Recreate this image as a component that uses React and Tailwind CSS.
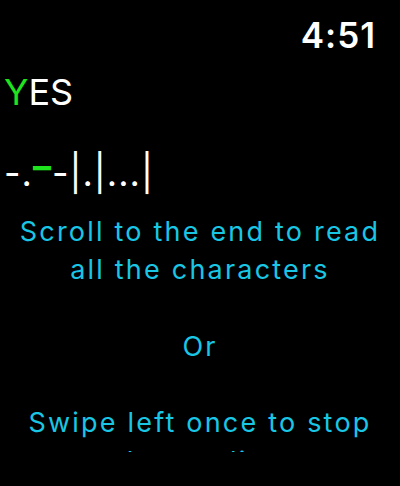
export default function App() {
  return (
    <div
      className="h-[486px] w-[400px] overflow-hidden bg-black text-white"
      style={{ fontFamily: "Inter, 'Noto Sans', sans-serif" }}
    >
      {/* status bar */}
      <div className="flex justify-end pr-6 pt-[15px]">
        <span className="text-[35px] font-semibold leading-[40px] tracking-[1px]">4:51</span>
      </div>

      {/* scroll area, clipped above the bottom edge */}
      <div className="h-[397px] overflow-hidden">
        <div className="pl-1 pt-[15px] text-[36px] leading-[44px]">
          <span className="text-[#1fe31f]">Y</span>ES
        </div>

        <div className="mt-[30px] pl-1 text-[36px] leading-[44px] tracking-[1px]">
          -.<span className="align-[7px] font-bold text-[#1fe31f]">–</span>-|.|...|
        </div>

        <p className="mt-[18px] whitespace-pre-line text-center text-[27px] leading-[38.3px] tracking-[2.2px] text-[#19c6e4]">
          {"Scroll to the end to read\nall the characters\n\nOr\n\nSwipe left once to stop\nthe reading"}
        </p>
      </div>
    </div>
  );
}
